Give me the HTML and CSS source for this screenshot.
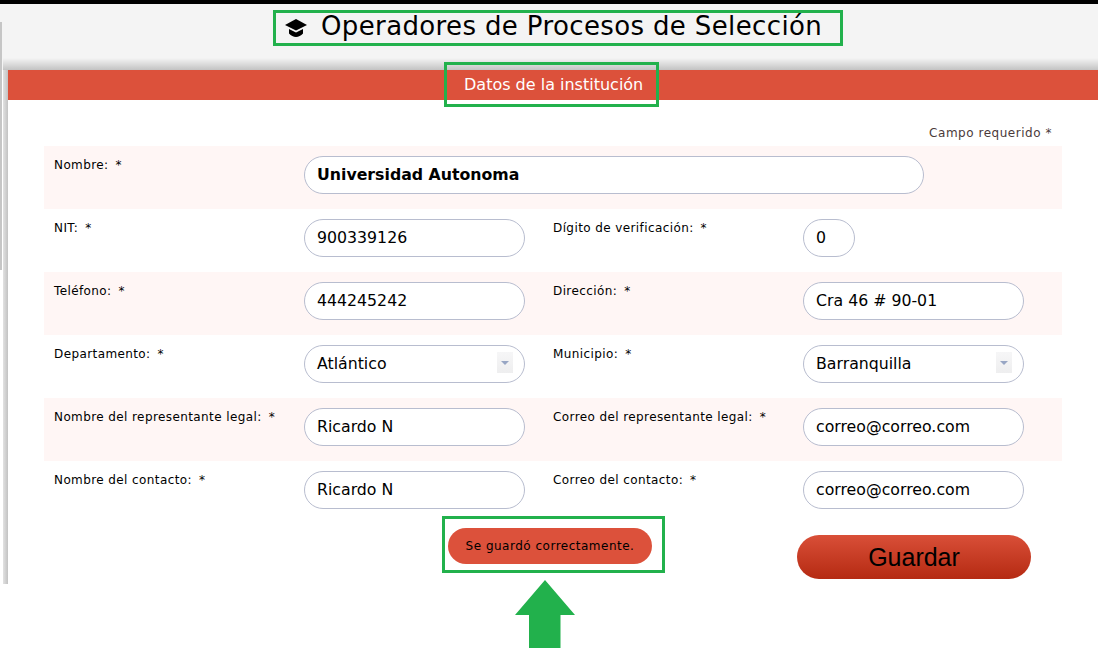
FILE: index.html
```html
<!DOCTYPE html>
<html lang="es">
<head>
<meta charset="utf-8">
<title>Operadores de Procesos de Selección</title>
<link rel="stylesheet" href="styles.css">
</head>
<body>
<div class="page">
  <div class="topbar"></div>
  <header class="title-area">
    <h1 class="title callout">
      <svg class="cap" viewBox="0 0 22 18" aria-hidden="true"><path d="M11 0 22 6 11 11.500 0 6Z"/><path d="M4 10 11 13.600 18 10V14.500C16 16.800 13.500 18 11 18S6 16.800 4 14.500Z"/></svg>
      <span>Operadores de Procesos de Selección</span>
    </h1>
  </header>
  <div class="edge"></div>
  <main class="card">
    <div class="card-head"><h2 class="card-title callout">Datos de la institución</h2></div>
    <p class="req">Campo requerido *</p>
    <form class="form">
      <div class="row tint">
        <label class="lab">Nombre:<span class="star">*</span></label>
        <div class="pill wide bold">Universidad Autonoma</div>
      </div>
      <div class="row">
        <label class="lab">NIT:<span class="star">*</span></label>
        <div class="pill">900339126</div>
        <label class="lab second">Dígito de verificación:<span class="star">*</span></label>
        <div class="pill tiny">0</div>
      </div>
      <div class="row tint">
        <label class="lab">Teléfono:<span class="star">*</span></label>
        <div class="pill">444245242</div>
        <label class="lab second">Dirección:<span class="star">*</span></label>
        <div class="pill">Cra 46 # 90-01</div>
      </div>
      <div class="row">
        <label class="lab">Departamento:<span class="star">*</span></label>
        <div class="pill select">Atlántico<span class="arrow"></span></div>
        <label class="lab second">Municipio:<span class="star">*</span></label>
        <div class="pill select">Barranquilla<span class="arrow"></span></div>
      </div>
      <div class="row tint">
        <label class="lab">Nombre del representante legal:<span class="star">*</span></label>
        <div class="pill">Ricardo N</div>
        <label class="lab second">Correo del representante legal:<span class="star">*</span></label>
        <div class="pill">correo@correo.com</div>
      </div>
      <div class="row">
        <label class="lab">Nombre del contacto:<span class="star">*</span></label>
        <div class="pill">Ricardo N</div>
        <label class="lab second">Correo del contacto:<span class="star">*</span></label>
        <div class="pill">correo@correo.com</div>
      </div>
      <div class="actions">
        <div class="toast-box"><div class="toast">Se guardó correctamente.</div></div>
        <button class="save" type="button">Guardar</button>
      </div>
    </form>
  </main>
  <svg class="up-arrow" viewBox="0 0 60 68" aria-hidden="true"><path d="M30 0 60 35H45.500V68H14V35H0Z"/></svg>
</div>
</body>
</html>
```
FILE: styles.css
```css
* { box-sizing: border-box; }
html, body { margin: 0; padding: 0; background: #fff; }
body { font-family: "DejaVu Sans", sans-serif; color: #000; }
.page { position: relative; width: 1100px; height: 668px; overflow: hidden; }
.topbar { height: 4px; width: 1098px; background: #000; }
.title-area { height: 66px; width: 1098px; background: #f4f4f4; display: flex; align-items: flex-start; padding: 6px 0 0 273px; }
.title { margin: 0; width: 570px; height: 36px; display: flex; align-items: center; gap: 14px; padding: 0 0 4px 9px; font-size: 26px; font-weight: 400; letter-spacing: 0.37px; white-space: nowrap; }
.callout { border: 3px solid #22b14c; }
.cap { width: 22px; height: 18px; fill: #000; flex: none; margin-top: 4px; }
.edge { position: absolute; left: 0; top: 22px; width: 2px; height: 248px; background: #c6c6c6; }
.card { position: relative; width: 1090px; height: 514px; margin-left: 8px; background: #fff; }
.card::before { content: ""; position: absolute; left: -5px; right: 0; top: -12px; height: 12px; background: linear-gradient(rgba(0,0,0,0), rgba(0,0,0,.2)); }
.card::after { content: ""; position: absolute; left: -5px; top: 0; width: 5px; height: 100%; background: linear-gradient(to right, #e2e2e2, #c2c2c2); }
.card-head { height: 30px; background: #dc513b; display: flex; padding-left: 436px; }
.card-title { margin: -8px 0 0; width: 215px; height: 45px; padding-left: 17px; color: #fff; font-size: 16px; font-weight: 400; display: flex; align-items: center; position: relative; z-index: 1; }
.req { margin: 0; height: 46px; padding: 26px 46px 0 0; text-align: right; font-size: 12px; color: #4b3a3a; letter-spacing: .53px; }
.form { padding: 0 36px; }
.row { height: 63px; display: flex; align-items: flex-start; padding: 10px 0 0 10px; }
.tint { background: #fff6f5; }
.lab { width: 250px; padding-top: 2px; font-size: 12px; letter-spacing: .4px; flex: none; }
.star { margin-left: 7px; }
.second { width: 250px; margin-left: 28px; }
.pill { width: 221px; height: 38px; border: 1px solid #b8bdcf; border-radius: 19px; background: #fff; display: flex; align-items: center; padding: 0 0 2px 12px; font-size: 15.75px; position: relative; }
.wide { width: 620px; }
.bold { font-weight: 700; }
.tiny { width: 52px; }
.arrow { position: absolute; right: 11px; top: 6px; width: 16px; height: 21px; background: linear-gradient(#f6f6f7, #eeeeef); }
.arrow::after { content: ""; position: absolute; left: 4px; top: 9px; border: 4px solid transparent; border-top: 4px solid #98a6c4; border-bottom: 0; }
.actions { display: flex; align-items: flex-start; padding-left: 398px; margin-top: -8px; }
.toast-box { width: 223px; height: 57px; border: 3px solid #22b14c; padding: 9px 3px; flex: none; }
.toast { width: 204px; height: 36px; border-radius: 18px; background: #dc513b; display: flex; align-items: center; justify-content: center; font-size: 12px; letter-spacing: .5px; }
.save { margin: 19px 0 0 132px; width: 234px; height: 44px; border: 0; border-radius: 22px; background: linear-gradient(#d94f38, #b52a12); color: #000; font: 25px "Liberation Sans", sans-serif; }
.up-arrow { position: absolute; left: 515px; top: 580px; width: 60px; height: 68px; fill: #22b14c; }
```
